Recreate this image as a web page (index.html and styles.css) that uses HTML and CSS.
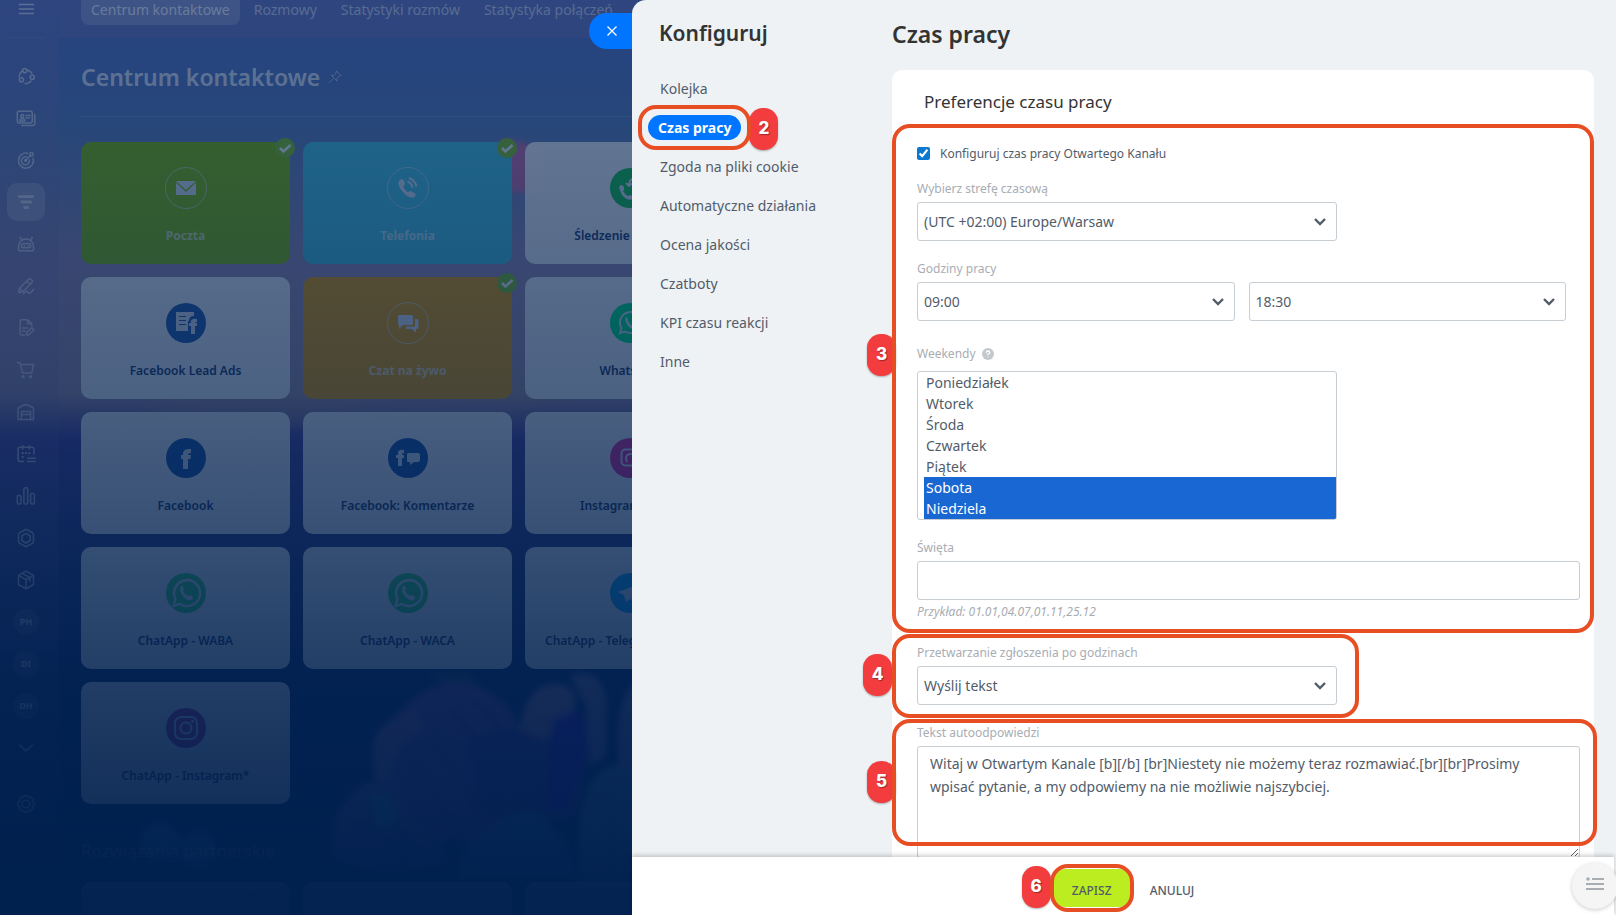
FILE: index.html
```html
<!DOCTYPE html>
<html lang="pl">
<head>
    <meta charset="UTF-8">
    <meta name="viewport" content="width=device-width, initial-scale=1.0">
    <title>Czas pracy - Centrum kontaktowe</title>
    <link rel="stylesheet" href="styles.css">
</head>
<body>
    <div class="workspace">
        <!-- blurred flower wallpaper -->
        <svg class="wallpaper" width="640" height="915" viewBox="0 0 640 915" aria-hidden="true">
            <defs>
                <filter id="soft"><feGaussianBlur stdDeviation="3"/></filter>
                <filter id="haze"><feGaussianBlur stdDeviation="14"/></filter>
            </defs>
            <path d="M500 142q20 -4 40 8v42h-34q-12-22-6-50z" fill="#d070a8" filter="url(#soft)"/>
            <path d="M150 395h200q90 26 190-24v26q-90 22-170 18-90 18-220-4z" fill="#b09890" opacity=".5" filter="url(#haze)"/>
            <g filter="url(#soft)" opacity=".8">
                <path d="M428 672h40l14 18-20 10z" fill="#305060"/>
                <path d="M412 700q40-30 80-6 30 20 30 50l-20 60-60 40-60-20q-20-80 30-124z" fill="#8a50a0"/>
                <path d="M374 740q8-20 40-30l10 20-24 70-14 5q-18-32-12-65z" fill="#b070a0"/>
                <path d="M392 800q-8-50 26-66 50-10 72 46l16 50-40 14q-54-14-74-44z" fill="#7848a8"/>
                <path d="M452 712q30 20 44 100M430 740q34 30 52 90M410 760q30 30 50 84M470 700q34 20 42 60" fill="none" stroke="#30286c" stroke-width="3"/>
                <path d="M466 738q50-14 110-14l12 30-12 60-50 16-48-20z" fill="#503498"/>
                <path d="M520 730q6-50 40-46 20 6 14 26l-30 30z" fill="#c080a0"/>
                <path d="M552 720l24-10q18 20 10 50l-20 50-20 2z" fill="#5010d0"/>
                <path d="M570 676q28-10 36 20v60l-16 10-4-60z" fill="#9c80a8"/>
                <path d="M618 740q0-50 22-60v100l-22 0z" fill="#9c80a8"/>
                <path d="M334 820q24-50 60-38l20 38 40 42-70 12-52-14z" fill="#7860a4"/>
                <path d="M350 820q40 10 60 46M376 812q30 20 50 50" fill="none" stroke="#283070" stroke-width="3"/>
                <path d="M370 795q20-6 28 26l-20 6z" fill="#50a8b0"/>
                <path d="M580 870q-8-98 40-106l20 10v120h-60z" fill="#6c8cb0"/>
                <path d="M610 800v100" fill="none" stroke="#304c80" stroke-width="3"/>
                <path d="M460 880q0-44 30-46 20-26 50-18 30 20 38 64z" fill="#4890b8"/>
                <circle cx="160" cy="842" r="20" fill="#4090b8"/>
                <circle cx="198" cy="850" r="19" fill="#4090b8"/>
            </g>
        </svg>

        <aside class="sidebar">
            <button class="side-item side-menu" aria-label="Menu"><svg viewBox="0 0 24 24"><path d="M4 6.500h17M4 12h17M4 17.500h17"/></svg></button>
            <nav class="side-list">
                <a class="side-item" href="#" aria-label="CRM"><svg viewBox="0 0 24 24"><circle cx="10.500" cy="5.500" r="2.500"/><circle cx="19.500" cy="13.500" r="2.500"/><circle cx="6.500" cy="16.500" r="2.500"/><path d="M14 5a8 8 0 0 1 5 4M18 18a8 8 0 0 1-7 3M7 6.500a8 8 0 0 0-3 6" stroke-dasharray="4 1.500"/></svg></a>
                <a class="side-item" href="#" aria-label="Kontakty"><svg viewBox="0 0 24 24"><rect x="1.500" y="4" width="18" height="14" rx="2"/><path d="M22.500 8v11a2 2 0 0 1-2 2H7M12 9h5M12 12h4M4.500 15.500q0-2.500 3-2.500t3 2.500z"/><circle cx="7.500" cy="9.500" r="1.800"/></svg></a>
                <a class="side-item" href="#" aria-label="Cele"><svg viewBox="0 0 24 24"><path d="M14 4A9 9 0 1 0 20.500 10M13 8.500a4.800 4.800 0 1 0 3 3.500M11.500 12.500l6-6"/><circle cx="18.500" cy="5" r="2"/><circle cx="11.500" cy="12.500" r="1"/></svg></a>
                <a class="side-item active" href="#" aria-label="Lejek"><svg viewBox="0 0 24 24"><path class="bar" d="M4 5.500h16M7 12h10.500M10.500 18.500h3.500"/></svg></a>
                <a class="side-item" href="#" aria-label="Roboty"><svg viewBox="0 0 24 24"><path d="M3 19v-4a9 9 0 0 1 18 0v4q0 1-1 1H4q-1 0-1-1zM7 7.500L5 4M17.500 7.500l2-3.500"/><rect x="6.500" y="11.500" width="11" height="5" rx="2.500"/><path d="M10 14h.2M14.500 14h.2"/></svg></a>
                <a class="side-item" href="#" aria-label="Podpis"><svg viewBox="0 0 24 24"><path d="M4 15L15 4q1.500-1.500 3 0l1 1q1.500 1.500 0 3L8.500 18.500 3.500 20zM13 6l4 4M4 15l4.500 3.500M9 21q5-4 5-2t3 1q3-1 4-4"/></svg></a>
                <a class="side-item" href="#" aria-label="Dokumenty"><svg viewBox="0 0 24 24"><path d="M10 20.500H7a2 2 0 0 1-2-2V4a2 2 0 0 1 2-2h7l5 5v2M14 2v5h5M8 12h6M8 15.500h3M12.500 20.500l.5-3 6-6 2.500 2.500-6 6z"/></svg></a>
                <a class="side-item" href="#" aria-label="Sklep"><svg viewBox="0 0 24 24"><path d="M1.500 3h3l3.500 12.500h11l2-10H5.500"/><circle cx="8.500" cy="20" r="1"/><circle cx="17.500" cy="20" r="1"/></svg></a>
                <a class="side-item" href="#" aria-label="Magazyn"><svg viewBox="0 0 24 24"><path d="M2.500 21V8.500q0-1.500 1.500-2.200l6.500-3q1.200-.5 2.500 0l6.500 3q1.500.7 1.500 2.200V21zM6.500 20.500v-9h11v9M6.500 15h11"/></svg></a>
                <a class="side-item" href="#" aria-label="Kalendarz"><svg viewBox="0 0 24 24"><path d="M9 21H4.500a2 2 0 0 1-2-2V6a2 2 0 0 1 2-2h15a2 2 0 0 1 2 2v6M8 2v4M16 2v4M14 17h9M14 21h9"/><path d="M7.500 11h1M11.500 11h1M15.500 11h1M7.500 15.500h1" stroke-width="2"/></svg></a>
                <a class="side-item" href="#" aria-label="Analityka"><svg viewBox="0 0 24 24"><rect x="1.500" y="11.500" width="4.500" height="10" rx="1.500"/><rect x="9.500" y="2" width="4.500" height="19.500" rx="1.500"/><rect x="17.500" y="9" width="4.500" height="12.500" rx="1.500"/></svg></a>
                <a class="side-item" href="#" aria-label="Aplikacje"><svg viewBox="0 0 24 24"><path d="M12 1.500l7.500 4q1.500 1 1.500 2.500v8q0 1.500-1.500 2.500l-7.500 4-7.500-4Q3 17.500 3 16V8q0-1.500 1.500-2.500z"/><path d="M12 6.500l5 3v5.500l-5 3-5-3V9.500z"/></svg></a>
                <a class="side-item" href="#" aria-label="Market"><svg viewBox="0 0 24 24"><path d="M12 1.500l9 5v11l-9 5-9-5v-11zM3 6.500l9 5 9-5M12 11.500v11M7.500 4l9 5v4.500"/></svg></a>
                <a class="side-item" href="#"><span>PH</span></a>
                <a class="side-item" href="#"><span>DI</span></a>
                <a class="side-item" href="#"><span>DH</span></a>
                <a class="side-item" href="#" aria-label="Więcej"><svg viewBox="0 0 24 24"><path d="M4.500 8.500l7.500 7 7.500-7"/></svg></a>
            </nav>
            <a class="side-item side-settings" href="#" aria-label="Ustawienia"><svg viewBox="0 0 24 24"><path d="M10 2h4l1 2.500 3-1 2.500 3-1 2.500 2.500 1.500v3L19.500 15l1 2.500-2.500 3-3-1-1 2.500h-4l-1-2.500-3 1-2.500-3 1-2.500L2 13.500v-3L4.500 9l-1-2.500 2.500-3 3 1z"/><circle cx="12" cy="12" r="4.500"/></svg></a>
        </aside>

        <main class="main">
            <nav class="tabs">
                <a class="tab current" href="#">Centrum kontaktowe</a>
                <a class="tab" href="#">Rozmowy</a>
                <a class="tab" href="#">Statystyki rozmów</a>
                <a class="tab" href="#">Statystyka połączeń</a>
            </nav>
            <div class="content">
                <h1 class="page-title">Centrum kontaktowe
                    <svg class="pin" viewBox="0 0 14 14"><path d="M8.500 1l4.500 4.500-1.500.5-2.500 2.500v2.500L3.500 5.500H6L8 3zM5.500 8.500l-4.500 4.500"/></svg>
                </h1>
                <div class="tiles">
                    <a class="tile green" href="#">
                        <svg class="tile-icon" viewBox="0 0 42 42"><circle class="ring" cx="21" cy="21" r="20.500"/><path d="M11 14h20l-10 9zM11 15.500l10 9.500 10-9.500V28H11z"/></svg>
                        <span>Poczta</span>
                        <svg class="tick" viewBox="0 0 20 20"><circle cx="10" cy="10" r="10"/><path d="M5 10l3.500 3.500L15.500 7"/></svg>
                    </a>
                    <a class="tile cyan" href="#">
                        <svg class="tile-icon" viewBox="0 0 42 42"><circle class="ring" cx="21" cy="21" r="20.500"/><path d="M12 14q3-4 5 0l1 3q0 1-2 2.500 2 4 5 6 2-2 3-1.500l4.500 3q1 1-1 3-4 2-9-2.500T12 19q-1-3 0-5z"/><path class="line" d="M20.500 14.500q4 1.500 5 6M22 11q6 2 7.500 8.500"/></svg>
                        <span>Telefonia</span>
                        <svg class="tick" viewBox="0 0 20 20"><circle cx="10" cy="10" r="10"/><path d="M5 10l3.500 3.500L15.500 7"/></svg>
                    </a>
                    <a class="tile" href="#">
                        <svg class="tile-icon" viewBox="0 0 42 42"><circle cx="21" cy="21" r="20" fill="#1dc84c"/><path d="M10 20q2-4 5 0l0 3-1 1q2 4 5 5l2-1q4 1 3 4-4 2-8-1t-6-11z"/><path class="line" d="M20 19q0-7 6-8M17 16l3 3 4-3"/></svg>
                        <span>Śledzenie połączeń</span>
                    </a>
                    <a class="tile" href="#">
                        <svg class="tile-icon" viewBox="0 0 42 42"><circle cx="21" cy="21" r="20" fill="#2b5fae"/><path fill-rule="evenodd" d="M11 10h18v4q-5 0-5 5h-1v10H11zM14 14v1h7v-1zM14 18v1h7v-1zM14 22v1h7v-1z"/><path d="M26 32v-8h-2v-3h2q-1-5 6-4v3q-2 0-2 1h2v3h-2v8z"/></svg>
                        <span>Facebook Lead Ads</span>
                    </a>
                    <a class="tile orange" href="#">
                        <svg class="tile-icon" viewBox="0 0 42 42"><circle class="ring" cx="21" cy="21" r="20.500"/><path d="M12 13h13q1 0 1 1v8q0 1-1 1h-9l-4 4v-4q-1 0-1-1v-8q0-1 1-1z"/><path d="M28 17h2q1.500 0 1.500 1.500V26q0 1-1.500 1h-1v4l-4-4h-6v-2.500h9z"/></svg>
                        <span>Czat na żywo</span>
                        <svg class="tick" viewBox="0 0 20 20"><circle cx="10" cy="10" r="10"/><path d="M5 10l3.500 3.500L15.500 7"/></svg>
                    </a>
                    <a class="tile" href="#">
                        <svg class="tile-icon" viewBox="0 0 42 42"><circle cx="21" cy="21" r="20" fill="#00f080"/><path class="line" d="M11 31l1.500-5a10.500 10.500 0 1 1 3.500 3.500z"/><path d="M16 16q2-2 3 1v2q2 4 5 5 2-2 4 1 0 3-4 2-7-2-8-11z"/></svg>
                        <span>WhatsApp</span>
                    </a>
                    <a class="tile" href="#">
                        <svg class="tile-icon" viewBox="0 0 42 42"><circle cx="21" cy="21" r="20" fill="#1f58a8"/><path d="M18 32V22h-2v-4h2q-1-7 8-6v4q-3-.5-3 2h3l-.5 4H23v10z"/></svg>
                        <span>Facebook</span>
                    </a>
                    <a class="tile" href="#">
                        <svg class="tile-icon" viewBox="0 0 42 42"><circle cx="21" cy="21" r="20" fill="#1f58a8"/><path d="M11 29v-8H9v-3h2q-1-6 6-5v3q-2-.5-2 2h2v3h-2v8zM21 16h10q2 0 2 2v5q0 2-2 2h-4l-4 3v-3h-2q-1 0-1-1v-6q0-2 1-2z"/></svg>
                        <span>Facebook: Komentarze</span>
                    </a>
                    <a class="tile" href="#">
                        <svg class="tile-icon" viewBox="0 0 42 42"><circle cx="21" cy="21" r="20" fill="#e92c9b"/><rect class="line" x="12.500" y="12.500" width="17" height="16" rx="4"/><path class="line" d="M18 25q-3-7 3-8t5 4l-2 4"/></svg>
                        <span>Instagram Direct</span>
                    </a>
                    <a class="tile" href="#">
                        <svg class="tile-icon" viewBox="0 0 42 42"><circle cx="21" cy="21" r="20" fill="#3cdc70"/><path class="line heavy" d="M8.500 34l2-7A13 13 0 1 1 15 32z"/><path d="M15 15q3-3 4 2l-1 2q2 4 5 5 2-2 5 1 0 4-5 3-8-3-8-13z"/></svg>
                        <span>ChatApp - WABA</span>
                    </a>
                    <a class="tile" href="#">
                        <svg class="tile-icon" viewBox="0 0 42 42"><circle cx="21" cy="21" r="20" fill="#3cdc70"/><path class="line heavy" d="M8.500 34l2-7A13 13 0 1 1 15 32z"/><path d="M15 15q3-3 4 2l-1 2q2 4 5 5 2-2 5 1 0 4-5 3-8-3-8-13z"/></svg>
                        <span>ChatApp - WACA</span>
                    </a>
                    <a class="tile" href="#">
                        <svg class="tile-icon" viewBox="0 0 42 42"><circle cx="21" cy="21" r="20" fill="#18b0ff"/><path d="M9 20l22-8-4 19-6-4-4 3-2-7z"/></svg>
                        <span>ChatApp - Telegram Personal</span>
                    </a>
                    <a class="tile" href="#">
                        <svg class="tile-icon" viewBox="0 0 42 42"><circle cx="21" cy="21" r="20" fill="#b03090"/><rect class="line" x="10" y="10" width="22" height="22" rx="6"/><circle class="line" cx="21" cy="21" r="5.500"/><circle cx="27.500" cy="14.500" r="1.500"/></svg>
                        <span>ChatApp - Instagram*</span>
                    </a>
                </div>
                <h2 class="partners">Rozwiązania partnerskie</h2>
                <div class="tiles">
                    <div class="tile"></div>
                    <div class="tile"></div>
                    <div class="tile"></div>
                </div>
            </div>
        </main>
    </div>
    <div class="scrim"></div>

    <div class="panel">
        <button class="close" aria-label="Zamknij"><svg viewBox="0 0 12 12"><path d="M1.500 1.500l9 9M10.500 1.500l-9 9"/></svg></button>

        <div class="panel-body">
            <nav class="menu">
                <h2 class="menu-title">Konfiguruj</h2>
                <a href="#">Kolejka</a>
                <a class="selected" href="#"><b>Czas pracy</b><i class="badge">2</i></a>
                <a href="#">Zgoda na pliki cookie</a>
                <a href="#">Automatyczne działania</a>
                <a href="#">Ocena jakości</a>
                <a href="#">Czatboty</a>
                <a href="#">KPI czasu reakcji</a>
                <a href="#">Inne</a>
            </nav>

            <form class="settings" id="settings">
                <h1 class="settings-title">Czas pracy</h1>
                <div class="card">
                    <h3 class="card-title">Preferencje czasu pracy</h3>

                    <section class="step hours">
                        <i class="badge">3</i>
                        <div class="check">
                            <input type="checkbox" id="enabled" checked>
                            <label for="enabled">Konfiguruj czas pracy Otwartego Kanału</label>
                        </div>
                        <label class="caption" for="zone">Wybierz strefę czasową</label>
                        <select class="field half" id="zone">
                            <option>(UTC +02:00) Europe/Warsaw</option>
                        </select>
                        <label class="caption" for="from">Godziny pracy</label>
                        <div class="range">
                            <select class="field" id="from"><option>09:00</option></select>
                            <select class="field" id="to" aria-label="Do godziny"><option>18:30</option></select>
                        </div>
                        <label class="caption weekend-caption" for="weekend">Weekendy
                            <svg viewBox="0 0 12 12"><circle cx="6" cy="6" r="6"/><path d="M4.300 4.800q0-1.800 1.700-1.800t1.700 1.500Q7.700 5.500 6 6.400v.6M6 8.400v.8"/></svg>
                        </label>
                        <select class="days half" id="weekend" multiple size="7">
                            <option>Poniedziałek</option>
                            <option>Wtorek</option>
                            <option>Środa</option>
                            <option>Czwartek</option>
                            <option>Piątek</option>
                            <option selected>Sobota</option>
                            <option selected>Niedziela</option>
                        </select>
                        <label class="caption" for="holidays">Święta</label>
                        <input class="field" type="text" id="holidays">
                        <p class="hint">Przykład: 01.01,04.07,01.11,25.12</p>
                    </section>

                    <section class="step after">
                        <i class="badge">4</i>
                        <label class="caption" for="action">Przetwarzanie zgłoszenia po godzinach</label>
                        <select class="field half" id="action">
                            <option>Wyślij tekst</option>
                        </select>
                    </section>

                    <section class="step reply">
                        <i class="badge">5</i>
                        <label class="caption" for="text">Tekst autoodpowiedzi</label>
                        <textarea class="message" id="text">Witaj w Otwartym Kanale [b][/b] [br]Niestety nie możemy teraz rozmawiać.[br][br]Prosimy wpisać pytanie, a my odpowiemy na nie możliwie najszybciej.</textarea>
                    </section>
                </div>
            </form>
        </div>

        <footer class="footer">
            <div class="save-wrap">
                <i class="badge">6</i>
                <button class="save" type="submit" form="settings">ZAPISZ</button>
            </div>
            <button class="cancel" type="button">ANULUJ</button>
        </footer>
        <button class="list-button" aria-label="Lista"><svg viewBox="0 0 18 14"><path d="M6 2h12M0 7h18M0 12h18"/><circle cx="2" cy="2" r="1.800"/></svg></button>
    </div>
</body>
</html>
```
FILE: styles.css
```css
/* Base */
* {
    box-sizing: border-box;
}

body {
    margin: 0;
    height: 100vh;
    overflow: hidden;
    font-family: "Noto Sans", "Open Sans", sans-serif;
    font-size: 14px;
    color: #525c69;
}

a {
    color: inherit;
    text-decoration: none;
}

h1, h2, h3, p {
    margin: 0;
}

button, select, input, textarea {
    font-family: inherit;
    color: inherit;
}

button {
    border: none;
    cursor: pointer;
}

/* Page behind the panel */
.workspace {
    position: relative;
    display: flex;
    height: 100vh;
    overflow: hidden;
    background: linear-gradient(#546dbe 0%, #5a76bd 8%, #6281b9 14%, #a391b3 29%, #aa95a6 43%, #54449a 48%, #353f84 60%, #0c2c68 75%, #00204e 100%);
}

.wallpaper {
    position: absolute;
    left: 0;
    top: 0;
}

.scrim {
    position: absolute;
    inset: 0;
    background: linear-gradient(rgba(0, 32, 78, 0.54) 0%, rgba(0, 32, 78, 0.61) 16%, rgba(0, 32, 78, 0.7) 43%, rgba(0, 32, 78, 0.76) 55%, rgba(0, 32, 78, 0.85) 72%, rgba(0, 32, 78, 0.92) 87%, rgba(0, 32, 78, 0.99) 98%);
}

.sidebar {
    position: relative;
    display: flex;
    flex-direction: column;
    align-items: center;
    width: 59px;
    padding-right: 7px;
    background: linear-gradient(rgba(130, 120, 180, 0.35), rgba(130, 120, 180, 0.1) 80%);
    color: rgba(255, 255, 255, 0.65);
}

.side-item {
    display: flex;
    align-items: center;
    justify-content: center;
    flex: none;
    width: 38px;
    height: 38px;
    border-radius: 10px;
    background: none;
    color: inherit;
}

.side-item svg {
    width: 20px;
    height: 20px;
    flex: none;
    fill: none;
    stroke: currentColor;
    stroke-width: 1.8;
    stroke-linecap: round;
    stroke-linejoin: round;
}

.side-item span {
    width: 26px;
    line-height: 26px;
    border-radius: 50%;
    background: rgba(255, 255, 255, 0.12);
    text-align: center;
    font-size: 9px;
    font-weight: bold;
}

.side-item.active {
    background: rgba(255, 255, 255, 0.25);
}

.side-item .bar {
    stroke-width: 3.5;
}

.side-menu {
    margin-top: -10px;
}

.side-list {
    display: flex;
    flex-direction: column;
    gap: 4px;
    width: 38px;
    margin-top: 9px;
    padding-top: 19px;
    border-top: 1px solid rgba(255, 255, 255, 0.1);
}

.side-settings {
    margin-top: 18px;
}

.main {
    position: relative;
    flex: 1;
}

.tabs {
    display: flex;
    align-items: flex-end;
    gap: 4px;
    height: 38px;
    padding: 0 22px 13px;
    background: rgba(130, 120, 180, 0.4);
    color: rgba(255, 255, 255, 0.6);
}

.tab {
    padding: 0 10px;
    line-height: 30px;
    border-radius: 8px;
    white-space: nowrap;
}

.tab.current {
    background: rgba(255, 255, 255, 0.22);
    color: rgba(255, 255, 255, 0.8);
}

.content {
    padding: 0 22px;
}

.page-title {
    display: flex;
    align-items: center;
    gap: 8px;
    height: 79px;
    margin-bottom: 25px;
    border-bottom: 1px solid rgba(255, 255, 255, 0.15);
    color: rgba(255, 255, 255, 0.8);
    font-size: 23px;
    font-weight: 600;
}

.pin {
    width: 14px;
    height: 14px;
    fill: none;
    stroke: rgba(255, 255, 255, 0.5);
}

.tiles {
    display: grid;
    grid-template-columns: repeat(3, 209px);
    grid-auto-rows: 122px;
    gap: 13px;
}

.tile {
    position: relative;
    display: flex;
    flex-direction: column;
    align-items: center;
    padding-top: 25px;
    border-radius: 10px;
    background: rgba(255, 255, 255, 0.96);
    color: #253a68;
    font-size: 12px;
    font-weight: 600;
    white-space: nowrap;
}

.tile > span {
    margin-top: 17px;
    line-height: 20px;
}

.tile.green,
.tile.cyan,
.tile.orange {
    color: rgba(255, 255, 255, 0.65);
    font-weight: 700;
}

.tile.green {
    background: #88c100;
}

.tile.cyan {
    background: #50cbe2;
}

.tile.orange {
    background: #f4a100;
}

.tile-icon {
    width: 42px;
    height: 42px;
    fill: #e4eaf4;
}

.tile-icon .ring,
.tile-icon .line {
    fill: none;
    stroke: #e4eaf4;
}

.tile-icon .ring {
    opacity: 0.6;
}

.tile-icon .line {
    stroke-width: 2;
}

.tile-icon .heavy {
    stroke-width: 2.5;
}

.tick {
    position: absolute;
    right: -5px;
    top: -4px;
    width: 20px;
    height: 20px;
    fill: #88c820;
}

.tick path {
    fill: none;
    stroke: #fff;
    stroke-width: 2.5;
}

.partners {
    margin: 31px 0 15px;
    line-height: 32px;
    color: rgba(255, 255, 255, 0.5);
    font-size: 17px;
    font-weight: normal;
}

/* Slide panel */
.panel {
    position: absolute;
    inset: 0 0 0 632px;
    display: flex;
    flex-direction: column;
    border-radius: 14px 0 0 0;
    background: #eef2f5;
}

.close {
    position: absolute;
    right: 100%;
    top: 13px;
    width: 43px;
    height: 36px;
    padding: 2px 0 0 2px;
    border-radius: 18px 0 0 18px;
    background: #0075ff;
}

.close svg {
    width: 12px;
    height: 12px;
    stroke: #fff;
    stroke-width: 1.3;
}

.panel-body {
    display: flex;
    flex: 1;
    min-height: 0;
    padding-right: 22px;
    overflow: hidden;
}

.menu {
    display: flex;
    flex-direction: column;
    align-items: flex-start;
    flex: none;
    width: 260px;
    padding: 16px;
}

.menu-title {
    height: 53px;
    padding-left: 11px;
    color: #333;
    font-size: 21px;
    font-weight: 600;
    line-height: 35px;
}

.menu a {
    position: relative;
    height: 25px;
    margin: 7px 0;
    padding: 0 12px;
    line-height: 25px;
}

.menu .selected {
    padding: 0 10px;
    border-radius: 13px;
    background: #0075ff;
    color: #fff;
}

/* Numbered steps */
.selected::after,
.step::after,
.save-wrap::after {
    content: "";
    position: absolute;
    inset: 0;
    border: 4px solid #e84e24;
    border-radius: 18px;
    pointer-events: none;
}

.selected::after {
    inset: -10px;
}

.badge {
    position: absolute;
    left: -25px;
    width: 29px;
    height: 42px;
    border-radius: 14px;
    background: #f23c3d;
    box-shadow: 0 1px 2px rgba(0, 0, 0, 0.3);
    color: #fff;
    font-family: Inter, sans-serif;
    font-size: 17px;
    font-style: normal;
    font-weight: 800;
    line-height: 40px;
    text-align: center;
    text-shadow: 1px 1px 1px rgba(0, 0, 0, 0.35);
}

.selected .badge {
    left: calc(100% + 8px);
    top: -7px;
}

.settings {
    flex: 1;
    min-width: 0;
    padding-top: 16px;
}

.settings-title {
    height: 54px;
    color: #333;
    font-size: 23px;
    font-weight: 600;
    line-height: 36px;
}

.card {
    border-radius: 10px 10px 0 0;
    background: #fff;
}

.card-title {
    height: 54px;
    padding: 18px 32px 0;
    color: #333;
    font-size: 17px;
    font-weight: normal;
    line-height: 27px;
}

.step {
    position: relative;
    display: flex;
    flex-direction: column;
    padding: 0 14px 0 25px;
}

.hours {
    height: 509px;
    padding-top: 19px;
}

.hours .badge {
    top: 210px;
}

.after {
    width: 467px;
    height: 84px;
    margin-top: 1px;
    padding-top: 10px;
}

.after .badge {
    top: 20px;
    left: -29px;
}

.reply {
    height: 140px;
    margin-top: 1px;
    padding-top: 5px;
}

.reply::after {
    inset: 0 -3px 13px 0;
}

.reply .badge {
    top: 42px;
}

.check {
    display: flex;
    align-items: center;
    gap: 10px;
    height: 20px;
    margin-bottom: 17px;
    font-size: 12px;
}

.check input {
    width: 13px;
    height: 13px;
    margin: 0;
    accent-color: #0b78d0;
}

.caption {
    height: 22px;
    color: #a8adb4;
    font-size: 12px;
    line-height: 17px;
}

.field {
    width: 100%;
    height: 39px;
    flex: none;
    padding: 0 6px;
    border: 1px solid #c6cdd3;
    border-radius: 3px;
    background: #fff;
    font-size: 14px;
}

select.field {
    appearance: none;
    background: #fff url("data:image/svg+xml,%3Csvg xmlns='http://www.w3.org/2000/svg' width='12' height='8' fill='none' stroke='%23525c69' stroke-width='2.4'%3E%3Cpath d='M1 1l5 5 5-5'/%3E%3C/svg%3E") no-repeat right 10px center;
}

.half {
    width: 420px;
}

.field + .caption {
    margin-top: 19px;
}

.range {
    display: flex;
    gap: 14px;
    padding-right: 14px;
}

.range .field {
    flex: 1;
    width: auto;
}

.weekend-caption {
    display: flex;
    align-items: center;
    gap: 6px;
    height: 17px;
    margin: 24px 0 9px;
}

.weekend-caption svg {
    width: 12px;
    height: 12px;
    fill: #c3c8cd;
}

.weekend-caption path {
    fill: none;
    stroke: #fff;
    stroke-width: 1.3;
}

.days {
    height: 149px;
    flex: none;
    margin-bottom: 19px;
    padding: 0 0 0 6px;
    border: 1px solid #c6cdd3;
    border-radius: 3px;
    overflow: hidden;
    font-size: 14px;
}

.days option {
    height: 21px;
    min-height: 21px;
    padding: 1px 2px 0;
    line-height: 20px;
}

.days option:checked {
    background: #1967d2 linear-gradient(#1967d2, #1967d2);
    color: #fff;
}

.hint {
    color: #a8adb4;
    font-size: 12px;
    font-style: italic;
    line-height: 23px;
}

.message {
    display: block;
    height: 112px;
    flex: none;
    padding: 5px 12px;
    border: 1px solid #c6cdd3;
    border-radius: 3px;
    background: #fff;
    font-size: 14px;
    line-height: 23px;
}

/* Footer */
.footer {
    position: relative;
    display: flex;
    align-items: center;
    justify-content: center;
    flex: none;
    height: 58px;
    margin-right: 2px;
    padding: 4px 0 0 14px;
    background: #fff;
    box-shadow: 0 -2px 4px rgba(0, 0, 0, 0.18);
}

.save-wrap {
    position: relative;
    padding: 5px 3px;
}

.save-wrap .badge {
    top: 2px;
    left: -28px;
}

.save {
    display: block;
    width: 78px;
    height: 38px;
    padding-top: 6px;
    border-radius: 12px;
    background: #bbed21;
    color: #535c69;
    font-size: 12px;
    font-weight: 500;
}

.cancel {
    padding: 5px 16px 0;
    background: none;
    font-size: 12px;
    font-weight: 500;
}

.list-button {
    position: absolute;
    right: -2px;
    bottom: 6px;
    width: 46px;
    height: 46px;
    padding: 0;
    border-radius: 50%;
    background: #f5f5f5;
    box-shadow: 0 1px 4px rgba(0, 0, 0, 0.2);
}

.list-button svg {
    width: 18px;
    height: 14px;
    fill: #a8adb4;
    stroke: #a8adb4;
    stroke-width: 2;
}

.list-button circle {
    stroke: none;
}
```
